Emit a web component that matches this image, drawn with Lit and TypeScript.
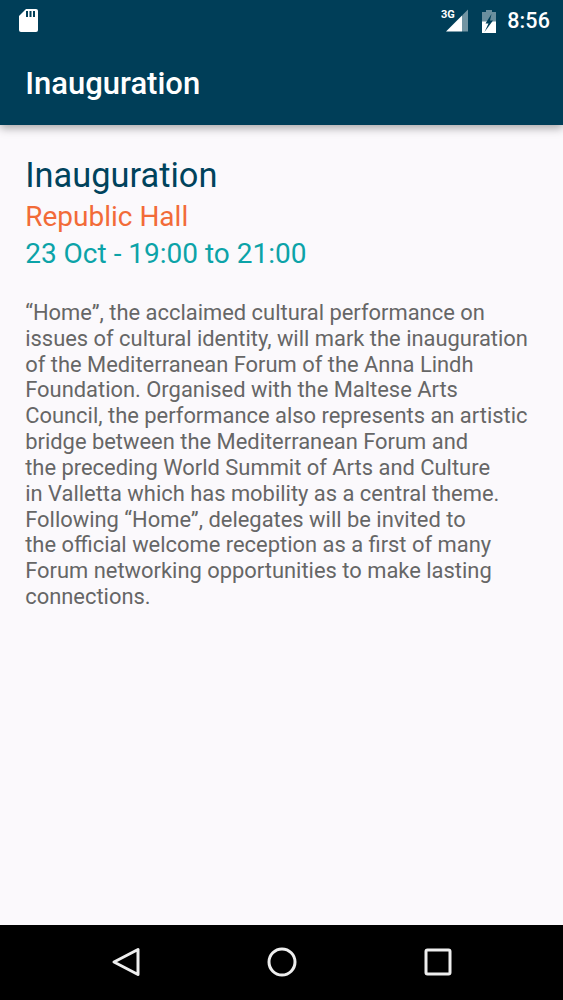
import { LitElement, html, css } from "lit";
import { customElement } from "lit/decorators.js";

const LINES = [
  "“Home”, the acclaimed cultural performance on",
  "issues of cultural identity, will mark the inauguration",
  "of the Mediterranean Forum of the Anna Lindh",
  "Foundation. Organised with the Maltese Arts",
  "Council, the performance also represents an artistic",
  "bridge between the Mediterranean Forum and",
  "the preceding World Summit of Arts and Culture",
  "in Valletta which has mobility as a central theme.",
  "Following “Home”, delegates will be invited to",
  "the official welcome reception as a first of many",
  "Forum networking opportunities to make lasting",
  "connections.",
];

@customElement("app-root")
export class AppRoot extends LitElement {
  static styles = css`
    :host {
      display: flex;
      flex-direction: column;
      width: 563px;
      height: 1000px;
      background: #fbf9fc;
      font-family: Roboto, "Liberation Sans", sans-serif;
      overflow: hidden;
    }
    .appbar {
      height: 125px;
      flex: none;
      background: #003e58;
      box-shadow: 0 3px 9px rgba(0, 0, 0, 0.34);
      display: flex;
      flex-direction: column;
      position: relative;
    }
    .status {
      height: 40px;
      display: flex;
      align-items: center;
      justify-content: space-between;
      padding: 0 13px 3px 19px;
      color: #fff;
    }
    .status-right {
      display: flex;
      align-items: center;
    }
    .clock {
      font-size: 21.5px;
      font-weight: 500;
      margin-left: 11px;
      letter-spacing: 0.1px;
    }
    .bat { margin-left: 13px; margin-top: 2px; }
    .title {
      font-size: 31px;
      font-weight: 500;
      color: #fff;
      padding: 0 25.2px;
      line-height: 36px;
      margin-top: 23px;
    }
    .content {
      flex: 1;
      padding: 30px 25.2px 0;
    }
    h1, h2, h3, p { margin: 0; font-weight: 400; }
    h1 { font-size: 34.4px; line-height: 40px; color: #00435c; }
    h2 { font-size: 28px; line-height: 36px; color: #f26b38; margin-top: 4px; }
    h3 { font-size: 28px; line-height: 38px; color: #0ca3a8; }
    .body {
      margin-top: 27px;
      font-size: 21.92px;
      line-height: 25.82px;
      color: #666;
      white-space: nowrap;
    }
    .line { display: block; }
    .nav {
      height: 75px;
      box-sizing: border-box;
      flex: none;
      background: #000;
      display: flex;
      align-items: center;
      justify-content: space-between;
      padding: 0 109px 1px 110px;
    }
  `;

  render() {
    return html`
      <div class="appbar">
        <div class="status">
          <svg width="19" height="23" viewBox="0 0 19 23">
            <path d="M7 0h10a2 2 0 0 1 2 2v19a2 2 0 0 1-2 2H2a2 2 0 0 1-2-2V7z" fill="#fff"/>
            <path d="M7 2h2v6H7zM10.500 2h2v6h-2zM14 2h2v6h-2z" fill="#003e58"/>
          </svg>
          <div class="status-right">
            <svg width="28" height="26" viewBox="0 0 28 26">
              <path d="M5 24.500h16V8.500z" fill="#fff"/>
              <path d="M21 8.500l6-6v22h-6z" fill="#fff" fill-opacity="0.45"/>
              <text x="0" y="10.500" font-family="Roboto, sans-serif" font-size="11" font-weight="700" fill="#fff">3G</text>
            </svg>
            <svg class="bat" width="14" height="23" viewBox="0 0 14 23">
              <path d="M4 0h6v2h4v21H0V2h4z" fill="#fff" fill-opacity="0.42"/>
              <path d="M0 11.500h14V23H0z" fill="#fff"/>
              <path d="M9.500 4 3.500 13.500h3L2.500 22 11 10.500H8z" fill="#003e58"/>
            </svg>
            <span class="clock">8:56</span>
          </div>
        </div>
        <div class="title">Inauguration</div>
      </div>
      <div class="content">
        <h1>Inauguration</h1>
        <h2>Republic Hall</h2>
        <h3>23 Oct - 19:00 to 21:00</h3>
        <p class="body">${LINES.map((l) => html`<span class="line">${l}</span>`)}</p>
      </div>
      <div class="nav">
        <svg width="32" height="32" viewBox="0 0 32 32">
          <path d="M28 3.500v25L4 16z" fill="none" stroke="#eee" stroke-width="3" stroke-linejoin="round"/>
        </svg>
        <svg width="32" height="32" viewBox="0 0 32 32">
          <circle cx="16" cy="16" r="13" fill="none" stroke="#eee" stroke-width="3"/>
        </svg>
        <svg width="32" height="32" viewBox="0 0 32 32">
          <rect x="4" y="4" width="24" height="24" rx="1.500" fill="none" stroke="#eee" stroke-width="3"/>
        </svg>
      </div>
    `;
  }
}
